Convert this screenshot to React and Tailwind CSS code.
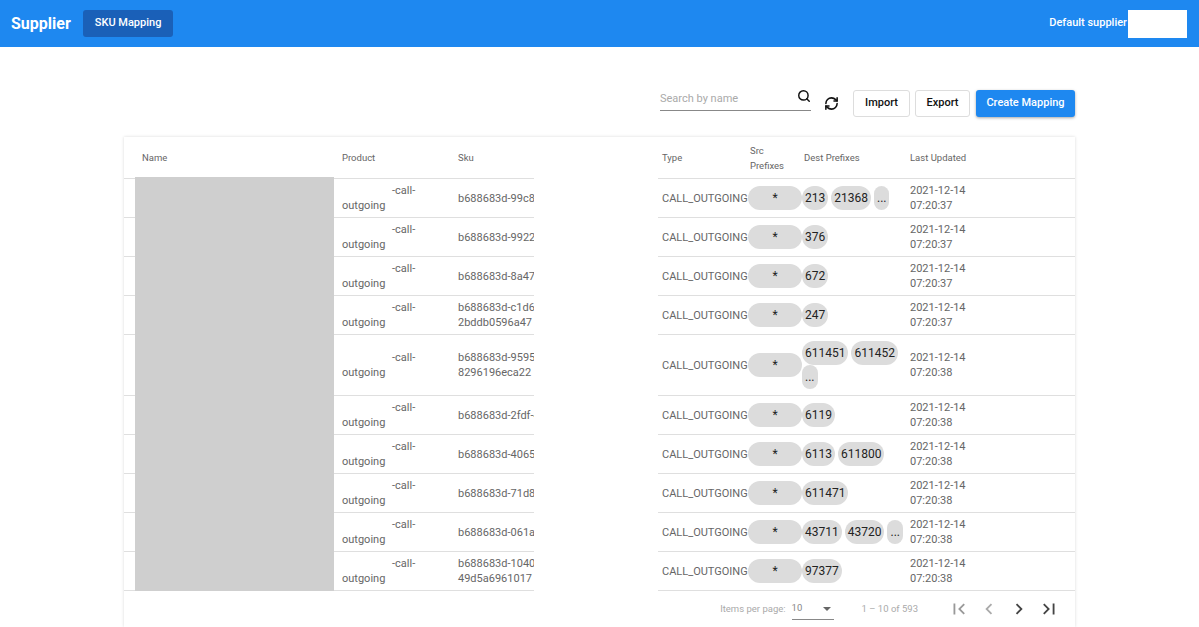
import { RefreshCw, Search } from "lucide-react";

const rows = [
  { h: "h-[39px]", sku: ["b688683d-99c8-"], src: "*", dest: ["213", "21368", "..."], time: "07:20:37" },
  { h: "h-[39px]", sku: ["b688683d-9922-"], src: "*", dest: ["376"], time: "07:20:37" },
  { h: "h-[39px]", sku: ["b688683d-8a47-"], src: "*", dest: ["672"], time: "07:20:37" },
  { h: "h-[39px]", sku: ["b688683d-c1d6-", "2bddb0596a47"], src: "*", dest: ["247"], time: "07:20:37" },
  { h: "h-[61px]", sku: ["b688683d-9595-", "8296196eca22"], src: "*", dest: ["611451", "611452", "..."], time: "07:20:38" },
  { h: "h-[39px]", sku: ["b688683d-2fdf-4"], src: "*", dest: ["6119"], time: "07:20:38" },
  { h: "h-[39px]", sku: ["b688683d-4065-"], src: "*", dest: ["6113", "611800"], time: "07:20:38" },
  { h: "h-[39px]", sku: ["b688683d-71d8-"], src: "*", dest: ["611471"], time: "07:20:38" },
  { h: "h-[39px]", sku: ["b688683d-061a-"], src: "*", dest: ["43711", "43720", "..."], time: "07:20:38" },
  { h: "h-[39px]", sku: ["b688683d-1040-", "49d5a6961017"], src: "*", dest: ["97377"], time: "07:20:38" },
];

const Chip = ({ label }) => (
  <span className="h-6 px-[3px] min-w-[10px] flex items-center justify-center rounded-xl bg-[#dcdcdc] text-[12px] text-[#222]">
    {label}
  </span>
);

const Row = ({ row }) => (
  <div className={`${row.h} flex items-center border-b border-[#dfdfdf] text-[11px] leading-[15px] text-[#666]`}>
    <div className="w-[218px]"></div>
    <div className="w-[116px]">
      <p className="pl-[50px]">-call-</p>
      <p>outgoing</p>
    </div>
    <div className="w-[204px]">
      {row.sku.map((line, index) => (
        <p key={index}>{line}</p>
      ))}
    </div>
    <div className="w-[86px]">CALL_OUTGOING</div>
    <div className="w-[54px]">
      <Chip label={row.src} />
    </div>
    <div className="w-[108px] flex flex-wrap gap-x-[3px] gap-y-[-1px]">
      {row.dest.map((d, index) => (
        <Chip key={index} label={d} />
      ))}
    </div>
    <div>
      <p>2021-12-14</p>
      <p>{row.time}</p>
    </div>
  </div>
);

export default function App() {
  return (
    <div className="h-[627px] overflow-hidden bg-white font-['Roboto',sans-serif]">
      <header className="h-[47px] flex items-center bg-[#1e88f0] text-white">
        <span className="ml-[11px] text-[16px] font-bold">Supplier</span>
        <span className="ml-[12px] h-[27px] px-3 flex items-center rounded-[3px] bg-[#1a60b8] text-[11px] font-medium">
          SKU Mapping
        </span>
        <span className="ml-auto text-[11px] font-medium">Default supplier</span>
        <span className="w-[59px] h-[28px] ml-px mr-[12px] bg-white"></span>
      </header>

      <div className="h-[90px] pt-[43px] pr-[124px] flex items-start justify-end">
        <div className="w-[151px] h-[22px] mt-[-1px] flex items-center justify-between border-b border-[#888]">
          <span className="text-[11px] text-[#aaa]">Search by name</span>
          <Search size={14} strokeWidth={2.5} className="mb-[7px] text-[#111]" />
        </div>
        <RefreshCw size={15} strokeWidth={2.5} className="ml-[13px] mt-[6px] text-[#111]" />
        <button className="ml-[14px] w-[57px] h-[27px] border border-[#ddd] rounded-[3px] text-[11px] font-medium text-[#111]">Import</button>
        <button className="ml-[5px] w-[55px] h-[27px] border border-[#ddd] rounded-[3px] text-[11px] font-medium text-[#111]">Export</button>
        <button className="ml-[6px] w-[99px] h-[27px] rounded-[3px] bg-[#1e88f0] text-[11px] font-medium text-white shadow-[0_1px_3px_rgba(0,0,0,0.35)]">Create Mapping</button>
      </div>

      <div className="relative ml-[124px] w-[951px] h-[490px] bg-white shadow-[0_0_3px_rgba(0,0,0,0.15)]">
        <div className="h-[42px] flex items-center border-b border-[#dfdfdf] text-[9.5px] leading-[15px] text-[#666]">
          <div className="w-[218px] pl-[18px]">Name</div>
          <div className="w-[116px]">Product</div>
          <div className="w-[204px]">Sku</div>
          <div className="w-[88px]">Type</div>
          <div className="w-[54px]">
            <p>Src</p>
            <p>Prefixes</p>
          </div>
          <div className="w-[106px]">Dest Prefixes</div>
          <div>Last Updated</div>
        </div>

        {rows.map((row, index) => (
          <Row key={index} row={row} />
        ))}

        <div className="h-[36px] pr-[15px] flex items-center justify-end text-[9.5px] text-[#aaa]">
          <span>Items per page:</span>
          <div className="ml-[6px] w-[42px] h-[22px] flex items-center justify-between border-b border-[#888] text-[#888]">
            <span>10</span>
            <span className="mr-[3px] border-x-[4px] border-t-[4px] border-x-transparent border-t-[#666]"></span>
          </div>
          <span className="ml-[28px]">1 – 10 of 593</span>
          <div className="ml-[30px] flex items-center gap-[8px]">
            <svg width="22" height="22" viewBox="0 0 24 24" fill="#999"><path d="M18.41 16.59 13.82 12l4.59-4.59L17 6l-6 6 6 6zM6 6h2v12H6z" /></svg>
            <svg width="22" height="22" viewBox="0 0 24 24" fill="#aaa"><path d="M15.41 7.41 14 6l-6 6 6 6 1.41-1.41L10.83 12z" /></svg>
            <svg width="22" height="22" viewBox="0 0 24 24" fill="#444"><path d="M10 6 8.59 7.41 13.17 12l-4.58 4.59L10 18l6-6z" /></svg>
            <svg width="22" height="22" viewBox="0 0 24 24" fill="#444"><path d="M5.59 7.41 10.18 12l-4.59 4.59L7 18l6-6-6-6zM16 6h2v12h-2z" /></svg>
          </div>
        </div>

        {/* blanked out bits of the shot */}
        <div className="absolute left-[11px] top-[40px] w-[199px] h-[414px] bg-[#cfcfcf]"></div>
        <div className="absolute left-[410px] top-0 w-[124px] h-[454px] bg-white"></div>
      </div>
    </div>
  );
}
